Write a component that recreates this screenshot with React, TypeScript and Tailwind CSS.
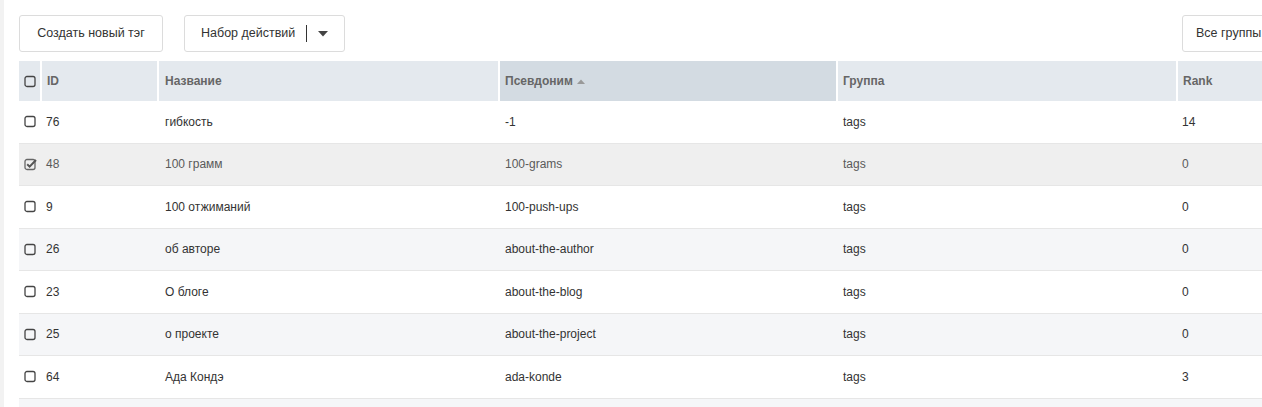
import React from "react";

type Row = { id: number; name: string; alias: string; group: string; rank: number; checked?: boolean };

const rows: Row[] = [
  { id: 76, name: "гибкость", alias: "-1", group: "tags", rank: 14 },
  { id: 48, name: "100 грамм", alias: "100-grams", group: "tags", rank: 0, checked: true },
  { id: 9, name: "100 отжиманий", alias: "100-push-ups", group: "tags", rank: 0 },
  { id: 26, name: "об авторе", alias: "about-the-author", group: "tags", rank: 0 },
  { id: 23, name: "О блоге", alias: "about-the-blog", group: "tags", rank: 0 },
  { id: 25, name: "о проекте", alias: "about-the-project", group: "tags", rank: 0 },
  { id: 64, name: "Ада Кондэ", alias: "ada-konde", group: "tags", rank: 3 },
  { id: 0, name: "", alias: "", group: "", rank: 0 },
];

function Box({ checked }: { checked?: boolean }) {
  return (
    <svg width="13" height="13" viewBox="0 0 13 13" className="shrink-0">
      <rect x="1" y="1.5" width="10" height="10" rx="2" fill="none" stroke={checked ? "#666" : "#444"} strokeWidth="1.3" />
      {checked && <path d="M3.2 6.3 L5.6 8.6 L12 2" fill="none" stroke="#555" strokeWidth="2" />}
    </svg>
  );
}

export default function App() {
  return (
    <div
      className="h-[407px] w-[1262px] overflow-hidden border-l-4 border-[#f2f2f2] bg-white pt-[15px] pl-[15px] text-[12px] text-[#333]"
      style={{ fontFamily: '"Liberation Sans", Arial, sans-serif' }}
    >
      <div className="flex h-[37px] w-[1300px] items-stretch">
        <button className="w-[144px] rounded-[3px] border border-[#dcdcdc] bg-white text-[12.5px] text-[#333]">
          Создать новый тэг
        </button>
        <button className="ml-[21px] flex w-[161px] items-center rounded-[3px] border border-[#dcdcdc] bg-white pl-[16px] text-[12.5px] text-[#333]">
          Набор действий
          <span className="ml-[11px] h-[17px] w-px bg-[#333]" />
          <svg width="10" height="6" viewBox="0 0 10 6" className="ml-[11px]">
            <path d="M0 0 H10 L5 5.5 Z" fill="#444" />
          </svg>
        </button>
        <button className="ml-auto w-[137px] rounded-[3px] border border-[#dcdcdc] bg-white pl-[13px] text-left text-[12.5px] text-[#333]">
          Все группы
        </button>
      </div>

      <div className="mt-[9px] w-[1300px]">
        <div className="flex h-[40px] bg-[#e4e9ee] font-bold text-[#666]">
          <div className="flex w-[21px] items-center pl-[5px]">
            <Box />
          </div>
          <div className="flex w-[117px] items-center border-l-2 border-white pl-[5px]">ID</div>
          <div className="flex w-[341px] items-center border-l-2 border-white pl-[6px]">Название</div>
          <div className="flex w-[338px] items-center border-l-2 border-white bg-[#d3dbe2] pl-[5px]">
            Псевдоним
            <svg width="8" height="5" viewBox="0 0 8 5" className="ml-[4px] mt-[1px]">
              <path d="M0 5 H8 L4 0.5 Z" fill="#999" />
            </svg>
          </div>
          <div className="flex w-[340px] items-center border-l-2 border-white pl-[5px]">Группа</div>
          <div className="flex flex-1 items-center border-l-2 border-white pl-[5px]">Rank</div>
        </div>

        {rows.map((r, i) => {
          const bg = r.checked ? "bg-[#efefef]" : i % 2 === 1 ? "bg-[#f5f6f8]" : "bg-white";
          const empty = r.id === 0;
          return (
            <div
              key={i}
              className={`flex h-[42.5px] border-b border-[#e6e6e6] ${bg} ${r.checked ? "text-[#5a5a5a]" : "text-[#333]"}`}
            >
              <div className="flex w-[21px] items-center pl-[5px]">{!empty && <Box checked={r.checked} />}</div>
              <div className="flex w-[117px] items-center pl-[6px]">{!empty && r.id}</div>
              <div className="flex w-[341px] items-center pl-[8px]">{r.name}</div>
              <div className="flex w-[338px] items-center pl-[7px]">{r.alias}</div>
              <div className="flex w-[340px] items-center pl-[7px]">{r.group}</div>
              <div className="flex flex-1 items-center pl-[6px]">{!empty && r.rank}</div>
            </div>
          );
        })}
      </div>
    </div>
  );
}
